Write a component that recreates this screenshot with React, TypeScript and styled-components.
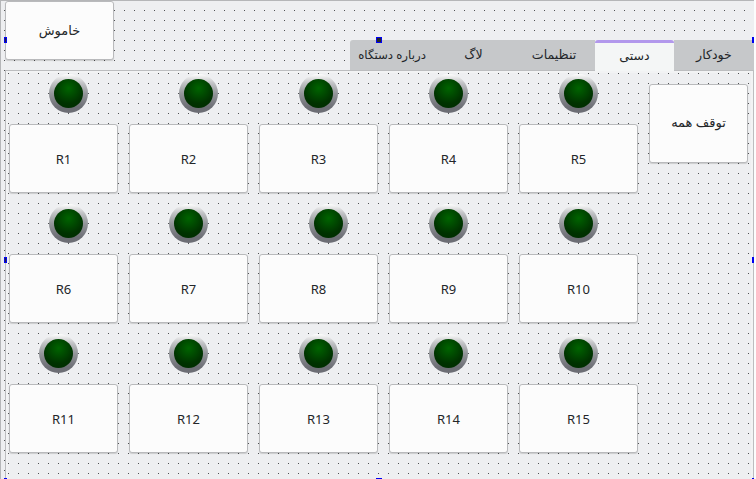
import React from "react";
import styled, { createGlobalStyle, css } from "styled-components";

const Global = createGlobalStyle`
  * { box-sizing: border-box; }
  body { margin: 0; background: #fcfcfc; }
`;

const dots = (x: number, y: number) => css`
  background-image: conic-gradient(from 0deg at 1px 1px, transparent 270deg, #505153 270deg);
  background-size: 10px 10px;
  background-position: ${x}px ${y}px;
`;

const Window = styled.main`
  position: relative;
  width: 754px;
  height: 479px;
  overflow: hidden;
  display: flex;
  flex-direction: column;
  padding-left: 5px;
  background-color: #eeeff1;
  ${dots(4, 0)}
  color: #232629;
  font: 13px/18px "Noto Sans", "DejaVu Sans", sans-serif;
  box-shadow: inset 1px 0 #b5b6b8, inset 0 1px #b5b6b8;
`;

const Header = styled.header`
  display: flex;
  flex: none;
  height: 70px;
  justify-content: space-between;
`;

const PushButton = styled.button<{ $w: number; $h: number }>`
  display: block;
  flex: none;
  width: ${(p) => p.$w}px;
  height: ${(p) => p.$h}px;
  padding: 0;
  border: 1px solid #b9babc;
  border-radius: 3px;
  background: #fcfcfc;
  box-shadow: 0 1px 1px rgba(0, 0, 0, 0.15);
  color: inherit;
  font: inherit;
`;

const PowerButton = styled(PushButton)`
  margin-top: 1px;
  padding-bottom: 2px;
`;

const StopButton = styled(PushButton)`
  padding-bottom: 3px;
`;

const TabBar = styled.nav`
  display: flex;
  direction: rtl;
  align-self: flex-end;
  width: 404px;
  height: 30px;
`;

const Tab = styled.div<{ $w: number; $active?: boolean; $size?: number }>`
  flex: none;
  width: ${(p) => p.$w}px;
  height: ${(p) => (p.$active ? 31 : 30)}px;
  position: relative;
  display: flex;
  align-items: center;
  justify-content: center;
  background: ${(p) => (p.$active ? "#f4f6f6" : "#c6c8ca")};
  border-top: ${(p) => (p.$active ? "3px solid #b298ec" : "0")};
  border-radius: ${(p) => (p.$active ? "3px 3px 0 0" : "0")};
  padding-bottom: ${(p) => (p.$active ? 3 : 0)}px;
  z-index: ${(p) => (p.$active ? 1 : 0)};
  font-size: ${(p) => p.$size ?? 12.6}px;
  white-space: nowrap;
  &:last-child { border-top-left-radius: 3px; padding-bottom: 2px; }
`;

const Panel = styled.section`
  display: flex;
  flex: none;
  width: 749px;
  height: 420px;
  border: 1px solid #bcbdbf;
  background-color: #eeeff1;
  ${dots(2, 2)}
  box-shadow: inset 0 2px #f2f3f4, inset 2px 0 #f2f3f4, inset -2px 0 #f2f3f4;
`;

const Relays = styled.div`
  width: 643px;
  padding: 3px 0 0 3px;
`;

const RelayRow = styled.div`
  display: flex;
  height: 130px;
`;

const Relay = styled.div<{ $first: boolean }>`
  width: ${(p) => (p.$first ? 120 : 130)}px;
`;

const LedSlot = styled.div<{ $indent: number }>`
  height: 50px;
  padding-left: ${(p) => p.$indent}px;
`;

const Led = styled.div`
  width: 39px;
  height: 39px;
  padding: 5px;
  border-radius: 50%;
  background: linear-gradient(#ffffff 0%, #c4c5c7 22%, #94969a 50%, #6d6e75 85%);
  &::after {
    content: "";
    display: block;
    width: 29px;
    height: 29px;
    border-radius: 50%;
    background: radial-gradient(circle at 50% 32%, #006400 0%, #003200 62%, #002a00 100%);
  }
`;

const StopArea = styled.div`
  padding-top: 13px;
`;

const Handle = styled.i<{ $x: number; $y: number; $w?: number }>`
  position: absolute;
  left: ${(p) => p.$x}px;
  top: ${(p) => p.$y}px;
  width: ${(p) => p.$w ?? 6}px;
  height: 6px;
  z-index: 2;
  border: 1px solid #0000f0;
  background: #232629;
`;

const tabs = [
  { label: "خودکار", w: 80 },
  { label: "دستی", w: 79, active: true },
  { label: "تنظیمات", w: 82 },
  { label: "لاگ", w: 79 },
  { label: "درباره دستگاه", w: 84, size: 11.8 },
];

const ledCenters = [
  [68, 198, 318, 448, 578],
  [68, 188, 328, 448, 578],
  [58, 188, 318, 448, 578],
];

const handles = [
  { x: 4, y: 37, w: 3 },
  { x: 376, y: 37 },
  { x: 752, y: 37, w: 2 },
  { x: 4, y: 257, w: 3 },
  { x: 752, y: 257, w: 2 },
  { x: 4, y: 478, w: 3 },
  { x: 376, y: 478 },
  { x: 752, y: 478, w: 2 },
];

export default function App() {
  return (
    <Window>
      <Global />
      <Header>
        <PowerButton $w={109} $h={59}>خاموش</PowerButton>
        <TabBar>
          {tabs.map((t) => (
            <Tab key={t.label} $w={t.w} $active={t.active} $size={t.size}>{t.label}</Tab>
          ))}
        </TabBar>
      </Header>
      <Panel>
        <Relays>
          {ledCenters.map((row, r) => (
            <RelayRow key={r}>
              {row.map((center, c) => {
                const left = c === 0 ? 9 : c * 130 - 1;
                return (
                  <Relay key={c} $first={c === 0}>
                    <LedSlot $indent={center - 19 - left}><Led /></LedSlot>
                    <PushButton $w={c === 0 ? 109 : 119} $h={69}>{`R${r * 5 + c + 1}`}</PushButton>
                  </Relay>
                );
              })}
            </RelayRow>
          ))}
        </Relays>
        <StopArea>
          <StopButton $w={99} $h={79}>توقف همه</StopButton>
        </StopArea>
      </Panel>
      {handles.map((h) => (
        <Handle key={`${h.x}-${h.y}`} $x={h.x} $y={h.y} $w={h.w} />
      ))}
    </Window>
  );
}
